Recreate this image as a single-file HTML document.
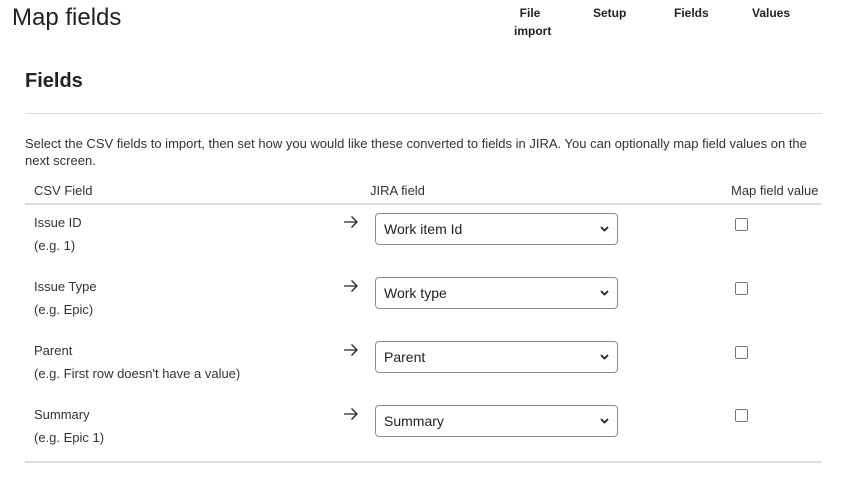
<!DOCTYPE html>
<html><head><style>
body{margin:0;width:856px;height:489px;background:#fff;font-family:"Liberation Sans",sans-serif;color:#222;position:relative;overflow:hidden}
.a{position:absolute;white-space:nowrap}
.nav{font-weight:bold;font-size:12px;text-align:center;line-height:18px}
.lbl{font-size:13px;color:#333}
.sel{position:absolute;left:375px;width:243px;height:32px;border:1px solid #8a8a8f;border-radius:4px;box-sizing:border-box;font-size:14px;line-height:30px;padding-left:8px;color:#222}
.sel svg{position:absolute;right:8px;top:12px}
.cb{position:absolute;left:735px;width:13px;height:13px;border:1px solid #777;border-radius:2px;box-sizing:border-box}
.arr{position:absolute;left:343px}
</style></head><body>
<div class="a" style="left:12px;top:4px;font-size:24px;color:#222">Map fields</div>
<div class="a nav" style="left:514px;top:4px;width:32px">File<br>import</div>
<div class="a nav" style="left:593px;top:4px">Setup</div>
<div class="a nav" style="left:674px;top:4px">Fields</div>
<div class="a nav" style="left:752px;top:4px">Values</div>
<div class="a" style="left:25px;top:70px;font-size:20px;font-weight:bold">Fields</div>
<div class="a" style="left:25px;top:113px;width:797px;height:1px;background:#ddd"></div>
<div class="a lbl" style="left:25px;top:135px;line-height:17px;white-space:normal;width:795px">Select the CSV fields to import, then set how you would like these converted to fields in JIRA. You can optionally map field values on the next screen.</div>
<div class="a lbl" style="left:34px;top:183px">CSV Field</div>
<div class="a lbl" style="left:370px;top:183px">JIRA field</div>
<div class="a lbl" style="left:731px;top:183px">Map field value</div>
<div class="a" style="left:25px;top:203px;width:797px;height:2px;background:#ddd"></div>

<div class="a lbl" style="left:34px;top:215px">Issue ID</div>
<div class="a lbl" style="left:34px;top:238px">(e.g. 1)</div>
<svg class="arr" style="top:215px" width="16" height="14"><path d="M1 7h13M8.5 1.5L14 7l-5.5 5.5" stroke="#222" stroke-width="1.3" fill="none"/></svg>
<div class="sel" style="top:213px">Work item Id<svg width="9" height="6"><path d="M1 1l3.5 3.5L8 1" stroke="#222" stroke-width="1.8" fill="none"/></svg></div>
<div class="cb" style="top:218px"></div>

<div class="a lbl" style="left:34px;top:279px">Issue Type</div>
<div class="a lbl" style="left:34px;top:302px">(e.g. Epic)</div>
<svg class="arr" style="top:279px" width="16" height="14"><path d="M1 7h13M8.5 1.5L14 7l-5.5 5.5" stroke="#222" stroke-width="1.3" fill="none"/></svg>
<div class="sel" style="top:277px">Work type<svg width="9" height="6"><path d="M1 1l3.5 3.5L8 1" stroke="#222" stroke-width="1.8" fill="none"/></svg></div>
<div class="cb" style="top:282px"></div>

<div class="a lbl" style="left:34px;top:343px">Parent</div>
<div class="a lbl" style="left:34px;top:366px">(e.g. First row doesn't have a value)</div>
<svg class="arr" style="top:343px" width="16" height="14"><path d="M1 7h13M8.5 1.5L14 7l-5.5 5.5" stroke="#222" stroke-width="1.3" fill="none"/></svg>
<div class="sel" style="top:341px">Parent<svg width="9" height="6"><path d="M1 1l3.5 3.5L8 1" stroke="#222" stroke-width="1.8" fill="none"/></svg></div>
<div class="cb" style="top:346px"></div>

<div class="a lbl" style="left:34px;top:407px">Summary</div>
<div class="a lbl" style="left:34px;top:430px">(e.g. Epic 1)</div>
<svg class="arr" style="top:407px" width="16" height="14"><path d="M1 7h13M8.5 1.5L14 7l-5.5 5.5" stroke="#222" stroke-width="1.3" fill="none"/></svg>
<div class="sel" style="top:405px">Summary<svg width="9" height="6"><path d="M1 1l3.5 3.5L8 1" stroke="#222" stroke-width="1.8" fill="none"/></svg></div>
<div class="cb" style="top:409px"></div>

<div class="a" style="left:25px;top:461px;width:797px;height:2px;background:#ddd"></div>
</body></html>
